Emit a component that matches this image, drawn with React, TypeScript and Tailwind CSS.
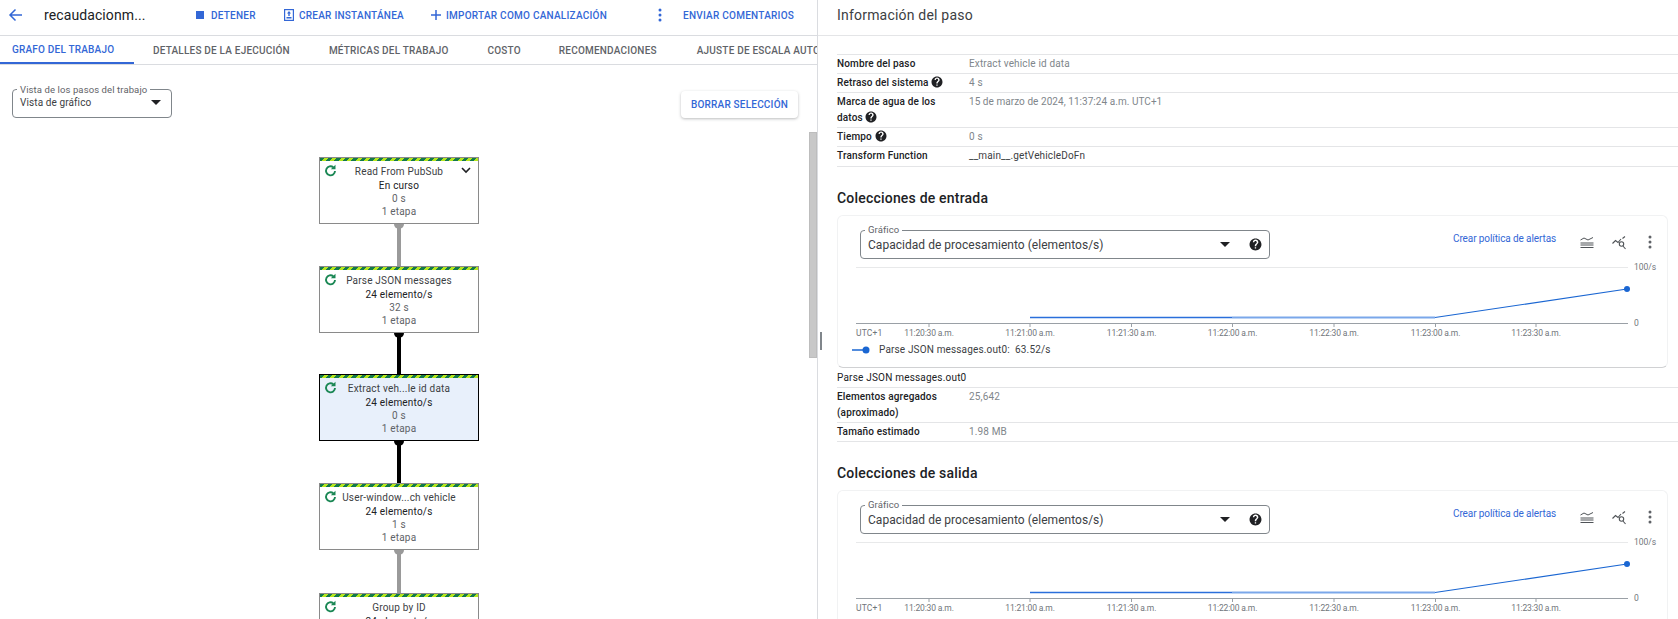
import React from "react";

const Help = ({ s = 12 }: { s?: number }) => (
  <svg width={s} height={s} viewBox="0 0 24 24" className="inline-block shrink-0 align-[-2px]">
    <path fill="#202124" d="M12 1C5.9 1 1 5.9 1 12s4.9 11 11 11 11-4.9 11-11S18.1 1 12 1zm1.2 18.4h-2.5v-2.5h2.5v2.5zm2.6-8.6l-1.1 1.2c-.9.9-1.4 1.6-1.4 3.1h-2.6v-.6c0-1.300.5-2.400 1.400-3.300l1.600-1.600c.5-.4.700-1 .700-1.700 0-1.300-1.100-2.400-2.400-2.400s-2.400 1.100-2.400 2.400H7.100c0-2.800 2.300-5.100 5.100-5.100s5.100 2.300 5.100 5.100c0 1.100-.6 2.100-1.500 2.900z" />
  </svg>
);

const Caret = () => (
  <svg width="10" height="5" viewBox="0 0 10 5" className="shrink-0">
    <path d="M0 0h10L5 5z" fill="#202124" />
  </svg>
);

const Refresh = () => (
  <svg width="13" height="13" viewBox="0 0 13 13" fill="none" className="absolute left-[4px] top-[6px]">
    <path d="M9.300 3.300A4.500 4.500 0 1 0 11 7" stroke="#1a8754" strokeWidth="1.900" />
    <path d="M6.800 5.200L11.500 5.200L11.500 0.800z" fill="#1a8754" />
  </svg>
);

type NodeProps = { title: string; l1: string; l2: string; selected?: boolean; chevron?: boolean };

const GraphNode = ({ title, l1, l2, selected, chevron }: NodeProps) => (
  <div className={`relative h-[67px] w-[160px] shrink-0 border ${selected ? "border-black bg-[#e8f0fb]" : "border-[#8a8a8a] bg-white"}`}>
    <div className="h-[3px] bg-[repeating-linear-gradient(135deg,#137a4b_0,#137a4b_3px,#b5e61d_3px,#b5e61d_6px)]" />
    <Refresh />
    {chevron && (
      <svg width="10" height="7" viewBox="0 0 10 7" fill="none" className="absolute left-[141px] top-[9px]">
        <path d="M1 1l4 4 4-4" stroke="#202124" strokeWidth="1.600" />
      </svg>
    )}
    <div className="flex flex-col items-center pt-[4px] text-[10px] leading-[13px] tracking-[0.2px] text-[#3c4043]">
      <div className="h-[14px] leading-[14px]">{title}</div>
      <div className="text-[#202124]">{l1}</div>
      <div className="text-[#5f6368]">{l2}</div>
      <div className="text-[#5f6368]">1 etapa</div>
    </div>
  </div>
);

const Edge = ({ dark, cls = "h-[42px]" }: { dark?: boolean; cls?: string }) => (
  <div className={`relative flex w-[160px] shrink-0 justify-center ${cls}`}>
    <div className={`h-full w-[4px] ${dark ? "bg-black" : "bg-[#9a9a9a]"}`} />
    <div className={`absolute top-0 h-[5px] w-[10px] rounded-b-full ${dark ? "bg-black" : "bg-[#9a9a9a]"}`} />
  </div>
);

const Row = ({ label, value, help, dark, h20 }: { label: React.ReactNode; value: string; help?: boolean; dark?: boolean; h20?: boolean }) => (
  <div className={`flex items-start border-b border-[#e4e5e7] text-[10px] leading-[16px] ${h20 ? "h-[20px]" : "h-[19px]"}`}>
    <div className="w-[132px] shrink-0 pt-[1px] font-medium tracking-[0.15px] text-[#202124]">
      {label} {help && <Help />}
    </div>
    <div className={`pt-[1px] tracking-[0.15px] ${dark ? "text-[#3c4043]" : "text-[#80868b]"}`}>{value}</div>
  </div>
);

const ticks = [
  [929, "11:20:30 a.m."],
  [1030, "11:21:00 a.m."],
  [1131.5, "11:21:30 a.m."],
  [1232.5, "11:22:00 a.m."],
  [1334, "11:22:30 a.m."],
  [1435.5, "11:23:00 a.m."],
  [1536, "11:23:30 a.m."],
] as const;

const ChartCard = ({ legend }: { legend: boolean }) => (
  <div className={`relative w-[831px] shrink-0 rounded-[6px] border border-[#f1f2f3] border-b-[#d0d1d3] ${legend ? "h-[153px]" : "h-[150px]"}`}>
    <div className="flex h-[43px] items-start pl-[22px] pt-[14px]">
      <div className="relative flex h-[29px] w-[410px] shrink-0 items-center justify-between rounded-[4px] border border-[#80868b] pl-[7px] pr-[7px] text-[12px] tracking-[0.03px] text-[#3c4043]">
        <span className="absolute -top-[7px] left-[4px] bg-white px-[3px] text-[9.500px] leading-[11px] tracking-[0.1px] text-[#5f6368]">Gráfico</span>
        <span>Capacidad de procesamiento (elementos/s)</span>
        <span className="flex items-center gap-[19px]">
          <Caret />
          <Help s={13} />
        </span>
      </div>
      <a className="ml-[183px] mt-[1px] whitespace-nowrap text-[10px] leading-[16px] tracking-[-0.1px] text-[#3367d6]">Crear política de alertas</a>
      <svg width="14" height="13" viewBox="0 0 14 13" className="absolute left-[742px] top-[20px]" fill="none" stroke="#4f5357" strokeWidth="1">
        <path d="M0.500 4L4 2l4 2 5-2.500M0.500 7h13M0.500 9h13M0.500 11.500h13" />
      </svg>
      <svg width="15" height="14" viewBox="0 0 15 14" className="absolute left-[774px] top-[20px]" fill="none" stroke="#4f5357" strokeWidth="1.100">
        <path d="M0.500 7.500L3.500 4.500 6 6.500 9 3M10.500 2.500L13 0.500" />
        <circle cx="9.500" cy="8" r="2.200" />
        <path d="M11 10l2.500 3" />
      </svg>
      <svg width="4" height="14" viewBox="0 0 4 14" className="absolute left-[810px] top-[19px]" fill="#5f6368">
        <circle cx="2" cy="2" r="1.500" />
        <circle cx="2" cy="7" r="1.500" />
        <circle cx="2" cy="12" r="1.500" />
      </svg>
    </div>
    <svg width="829" height="82" viewBox="838 259 829 82" className="block font-['Roboto',sans-serif]">
      <line x1="856" x2="1628" y1="267.500" y2="267.500" stroke="#e8e9ea" />
      <line x1="856" x2="1628" y1="323.500" y2="323.500" stroke="#9aa0a6" />
      {ticks.map(([x, t]) => (
        <g key={t}>
          <line x1={x} x2={x} y1="323" y2="327" stroke="#9aa0a6" />
          <text x={x} y="336" fontSize="8.500" fill="#70757a" textAnchor="middle" letterSpacing="-0.15">{t}</text>
        </g>
      ))}
      <text x="856" y="336" fontSize="8.500" fill="#70757a" letterSpacing="0.2">UTC+1</text>
      <text x="1634" y="270" fontSize="8.500" fill="#70757a">100/s</text>
      <text x="1634" y="326" fontSize="8.500" fill="#70757a">0</text>
      <path d="M1030 317.500H1232" stroke="#2a6fdb" strokeWidth="1.500" fill="none" />
      <path d="M1232 317.500H1435" stroke="#7aa7ea" strokeWidth="2" fill="none" />
      <path d="M1435 317.500L1627 289" stroke="#1a66d2" strokeWidth="1.200" fill="none" />
      <circle cx="1627" cy="289" r="3" fill="#1a66d2" />
    </svg>
    {legend && (
      <div className="flex items-center pl-[14px] pt-[1px] text-[10px] leading-[16px] tracking-[0.15px] text-[#3c4043]">
        <svg width="18" height="8" viewBox="0 0 18 8" className="mr-[9px]">
          <line x1="0" x2="14" y1="4" y2="4" stroke="#1a66d2" strokeWidth="1.500" />
          <circle cx="14" cy="4" r="3.500" fill="#1a66d2" />
        </svg>
        Parse JSON messages.out0:&nbsp; 63.52/s
      </div>
    )}
  </div>
);

export default function App() {
  return (
    <div className="flex h-[619px] w-[1678px] overflow-hidden bg-white font-['Roboto',sans-serif] text-[#202124]">
      {/* Left */}
      <div className="flex w-[818px] shrink-0 flex-col border-r border-[#dadce0]">
        <div className="flex h-[36px] shrink-0 items-center whitespace-nowrap border-b border-[#dadce0] pb-[5px] text-[10px] font-medium tracking-[0.25px] text-[#3367d6]">
          <svg width="14" height="14" viewBox="0 0 14 14" fill="none" stroke="#3367d6" strokeWidth="1.500" className="ml-[8px] shrink-0">
            <path d="M14 7H2M7.500 1.500L2 7l5.500 5.500" />
          </svg>
          <span className="ml-[22px] w-[110px] shrink-0 text-[14px] font-normal tracking-[0.1px] text-[#202124]">recaudacionm...</span>
          <span className="ml-[42px] h-[8px] w-[8px] shrink-0 bg-[#3367d6]" />
          <span className="ml-[7px] w-[45px] shrink-0">DETENER</span>
          <svg width="10" height="12" viewBox="0 0 10 12" className="ml-[28px] shrink-0">
            <rect x="0.600" y="0.600" width="8.800" height="10.800" fill="none" stroke="#3367d6" strokeWidth="1.200" />
            <path d="M5 2l2 2.500H5.700V7H4.300V4.500H3zM2.500 8h5v1.500h-5z" fill="#3367d6" />
          </svg>
          <span className="ml-[5px] w-[104px] shrink-0">CREAR INSTANTÁNEA</span>
          <svg width="10" height="10" viewBox="0 0 10 10" className="ml-[28px] shrink-0" stroke="#3367d6" strokeWidth="1.500">
            <path d="M5 0v10M0 5h10" />
          </svg>
          <span className="ml-[5px] w-[160px] shrink-0">IMPORTAR COMO CANALIZACIÓN</span>
          <svg width="4" height="14" viewBox="0 0 4 14" fill="#3367d6" className="ml-[52px] shrink-0">
            <circle cx="2" cy="2" r="1.500" />
            <circle cx="2" cy="7" r="1.500" />
            <circle cx="2" cy="12" r="1.500" />
          </svg>
          <span className="ml-[21px] w-[110px] shrink-0">ENVIAR COMENTARIOS</span>
        </div>
        <div className="flex h-[29px] shrink-0 items-stretch overflow-hidden border-b border-[#dadce0] text-[10px] font-medium tracking-[0.2px] text-[#5f6368]">
          <div className="mr-[19px] flex w-[134px] shrink-0 items-center whitespace-nowrap border-b-2 border-[#3367d6] pl-[12px] text-[#3367d6]">GRAFO DEL TRABAJO</div>
          <div className="flex shrink-0 items-center whitespace-nowrap">DETALLES DE LA EJECUCIÓN</div>
          <div className="ml-[39px] flex shrink-0 items-center whitespace-nowrap">MÉTRICAS DEL TRABAJO</div>
          <div className="ml-[39px] flex shrink-0 items-center whitespace-nowrap">COSTO</div>
          <div className="ml-[38px] flex shrink-0 items-center whitespace-nowrap">RECOMENDACIONES</div>
          <div className="ml-[40px] flex shrink-0 items-center whitespace-nowrap">AJUSTE DE ESCALA AUTOMÁTICO</div>
        </div>
        <div className="relative flex min-h-0 flex-1 flex-col overflow-hidden">
          <div className="flex items-start justify-between pl-[12px] pr-[19px] pt-[24px]">
            <div className="relative flex h-[29px] w-[160px] items-center justify-between rounded-[4px] border border-[#80868b] pb-[2px] pl-[7px] pr-[10px] text-[10px] tracking-[0.1px] text-[#3c4043]">
              <span className="absolute -top-[6px] left-[4px] whitespace-nowrap bg-white px-[3px] text-[9.500px] leading-[11px] text-[#5f6368]">Vista de los pasos del trabajo</span>
              <span>Vista de gráfico</span>
              <Caret />
            </div>
            <div className="mt-[2px] flex h-[27px] w-[117px] items-center justify-center rounded-[4px] bg-white text-[10px] font-medium tracking-[0.2px] text-[#3367d6] shadow-[0_1px_3px_rgba(60,64,67,0.35)]">BORRAR SELECCIÓN</div>
          </div>
          <div className="flex flex-col pl-[319px] pt-[39px]">
            <GraphNode title="Read From PubSub" l1="En curso" l2="0 s" chevron />
            <Edge />
            <GraphNode title="Parse JSON messages" l1="24 elemento/s" l2="32 s" />
            <Edge dark cls="h-[41px]" />
            <GraphNode title="Extract veh...le id data" l1="24 elemento/s" l2="0 s" selected />
            <Edge dark />
            <GraphNode title="User-window...ch vehicle" l1="24 elemento/s" l2="1 s" />
            <Edge cls="h-[43px]" />
            <GraphNode title="Group by ID" l1="24 elemento/s" l2="1 s" />
          </div>
          <div className="absolute right-0 top-[67px] h-[226px] w-[8px] border border-[#bdbdbd] bg-[#c8c8c8]" />
        </div>
      </div>
      {/* Right */}
      <div className="relative flex min-w-0 flex-1 flex-col">
        <div className="absolute left-[2px] top-[332px] h-[18px] w-[2px] bg-[#80868b]" />
        <div className="flex h-[36px] shrink-0 items-center border-b border-[#e4e5e7] pb-[5px] pl-[19px] text-[14px] tracking-[0.2px] text-[#3c4043]">Información del paso</div>
        <div className="pl-[19px] pt-[18px]">
          <div className="border-t border-[#e4e5e7]">
            <Row label="Nombre del paso" value="Extract vehicle id data" />
            <Row label="Retraso del sistema" value="4 s" help />
            <div className="flex h-[35px] items-start border-b border-[#e4e5e7] text-[10px] leading-[16px]">
              <div className="w-[132px] shrink-0 pr-[20px] pt-[1px] font-medium tracking-[0.15px]">Marca de agua de los datos <Help /></div>
              <div className="pt-[1px] tracking-[0.05px] text-[#80868b]">15 de marzo de 2024, 11:37:24 a.m. UTC+1</div>
            </div>
            <Row label="Tiempo" value="0 s" help />
            <Row label="Transform Function" value="__main__.getVehicleDoFn" dark h20 />
          </div>
          <div className="h-[48px] pt-[21px] text-[14px] font-medium leading-[20px] tracking-[0.2px]">Colecciones de entrada</div>
          <ChartCard legend />
          <div className="flex h-[20px] items-center border-b border-[#e4e5e7] text-[10px] tracking-[0.2px] text-[#202124]">Parse JSON messages.out0</div>
          <div className="flex h-[35px] items-start border-b border-[#e4e5e7] text-[10px] leading-[16px]">
            <div className="w-[132px] shrink-0 pt-[1px] font-medium tracking-[0.15px]">Elementos agregados (aproximado)</div>
            <div className="pt-[1px] tracking-[0.15px] text-[#80868b]">25,642</div>
          </div>
          <Row label="Tamaño estimado" value="1.98 MB" />
          <div className="h-[48px] pt-[21px] text-[14px] font-medium leading-[20px] tracking-[0.2px]">Colecciones de salida</div>
          <ChartCard legend={false} />
        </div>
      </div>
    </div>
  );
}
